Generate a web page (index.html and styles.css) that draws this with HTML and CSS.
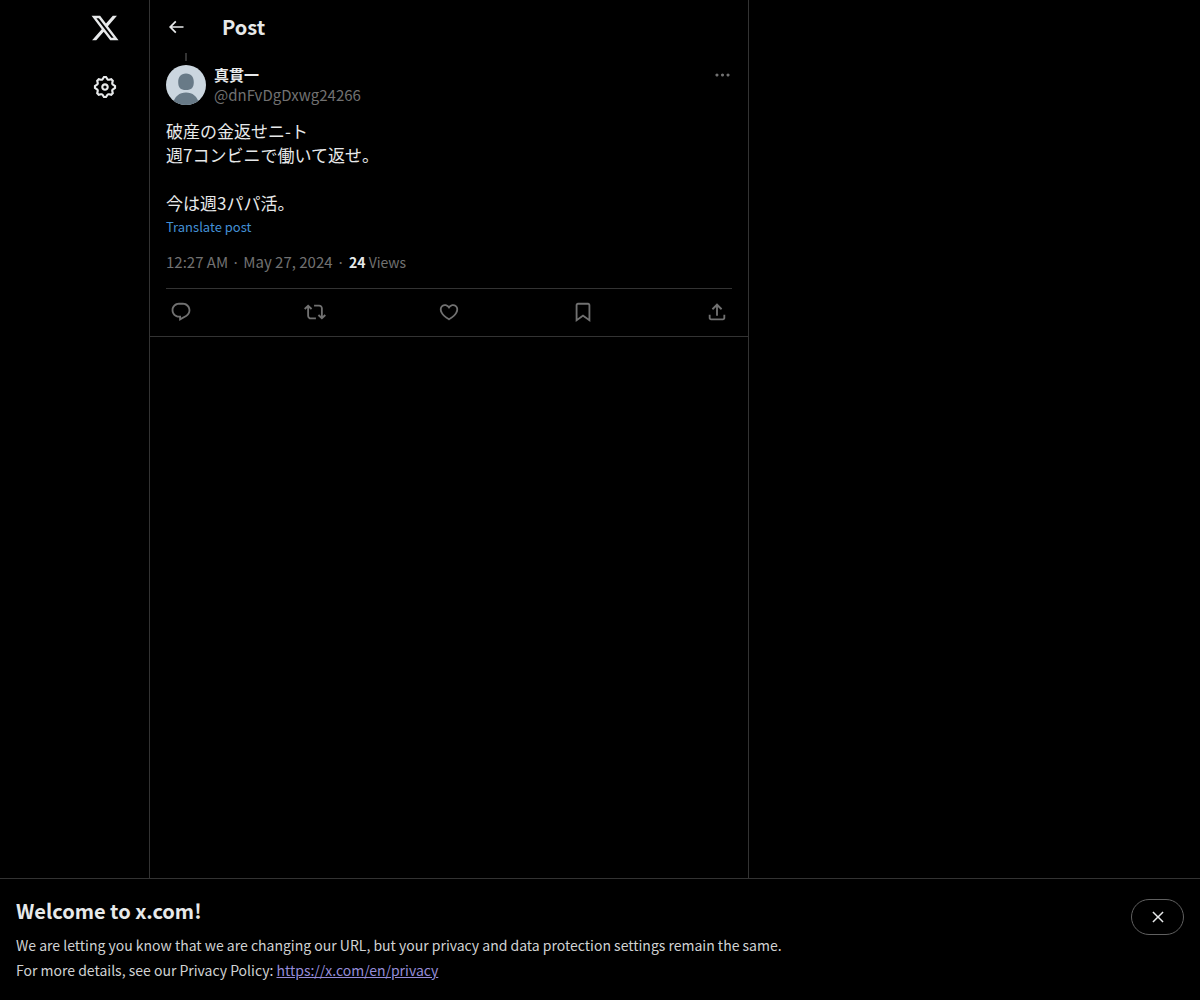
FILE: index.html
```html
<!DOCTYPE html>
<html lang="ja">
	<head>
		<meta charset="utf-8">
		<meta name="viewport" content="width=device-width, initial-scale=1">
		<title>Post / X</title>
		<link rel="stylesheet" href="styles.css">
	</head>
	<body>
		<div class="layout">
			<nav class="side">
				<a class="logo" href="#" aria-label="X">
					<svg viewBox="0 0 24 24"><path d="M18.244 2.25h3.308l-7.227 8.26 8.502 11.24H16.17l-5.214-6.817L4.99 21.75H1.68l7.73-8.835L1.254 2.25H8.08l4.713 6.231zm-1.161 17.52h1.833L7.084 4.126H5.117z"/></svg>
				</a>
				<a class="settings" href="#" aria-label="Settings">
					<svg viewBox="0 0 24 24"><path d="M10.54 1.75h2.92l1.57 2.36c.11.17.32.25.53.21l2.53-.59 2.17 2.17-.58 2.54c-.05.2.04.41.21.53l2.36 1.57v2.92l-2.36 1.57c-.17.12-.26.33-.21.53l.58 2.54-2.17 2.17-2.53-.59c-.21-.04-.42.04-.53.21l-1.57 2.36h-2.92l-1.58-2.36c-.11-.17-.32-.25-.52-.21l-2.54.59-2.17-2.17.58-2.54c.05-.2-.03-.41-.21-.53l-2.35-1.57v-2.92L4.1 8.97c.18-.12.26-.33.21-.53L3.73 5.9 5.9 3.73l2.54.59c.2.04.41-.04.52-.21l1.58-2.36zm1.07 2l-.98 1.47C10.05 6.08 9 6.5 7.99 6.27l-1.46-.34-.6.6.33 1.46c.24 1.01-.18 2.07-1.05 2.64l-1.46.98v.78l1.46.98c.87.57 1.29 1.63 1.05 2.64l-.33 1.46.6.6 1.46-.34c1.01-.23 2.06.19 2.64 1.05l.98 1.47h.78l.97-1.47c.58-.86 1.63-1.28 2.65-1.05l1.45.34.61-.6-.34-1.46c-.23-1.01.18-2.07 1.05-2.64l1.47-.98v-.78l-1.47-.98c-.87-.57-1.28-1.63-1.05-2.64l.34-1.46-.61-.6-1.45.34c-1.02.23-2.07-.19-2.65-1.05l-.97-1.47h-.78zM12 10.5c-.83 0-1.5.67-1.5 1.5s.67 1.5 1.5 1.5c.82 0 1.5-.67 1.5-1.5s-.68-1.5-1.5-1.5zM8.5 12c0-1.93 1.56-3.5 3.5-3.5 1.93 0 3.5 1.57 3.5 3.5s-1.57 3.5-3.5 3.5c-1.94 0-3.5-1.57-3.5-3.5z"/></svg>
				</a>
			</nav>
			<main class="column">
				<header class="top">
					<button class="back" aria-label="Back">
						<svg viewBox="0 0 24 24"><path d="M7.414 13l5.043 5.04-1.414 1.42L3.586 12l7.457-7.46 1.414 1.42L7.414 11H21v2H7.414z"/></svg>
					</button>
					<h1>Post</h1>
				</header>
				<article class="post">
					<div class="thread"></div>
					<div class="author">
						<svg class="avatar" viewBox="0 0 40 40">
							<defs><clipPath id="round"><circle cx="20" cy="20" r="20"/></clipPath></defs>
							<g clip-path="url(#round)">
								<path fill="#cbd6df" d="M0 0h40v40H0z"/>
								<path fill="#687a87" d="M20 8.500c-5.500 0-7.800 3.500-7.800 8.700 0 5.300 2.300 7.800 7.800 7.800s7.800-2.500 7.800-7.800c0-5.200-2.300-8.700-7.800-8.700zM20 27.500c-6.500 0-11.500 3.500-13.500 12.500h27C31.500 31 26.500 27.500 20 27.500z"/>
							</g>
						</svg>
						<div class="names">
							<a class="name" href="#">真貫一</a>
							<a class="handle" href="#">@dnFvDgDxwg24266</a>
						</div>
						<button class="more" aria-label="More">
							<svg viewBox="0 0 24 24"><path d="M3 12c0-1.100.900-2 2-2s2 .900 2 2-.900 2-2 2-2-.900-2-2zm9 2c1.100 0 2-.900 2-2s-.900-2-2-2-2 .900-2 2 .900 2 2 2zm7 0c1.100 0 2-.900 2-2s-.900-2-2-2-2 .900-2 2 .900 2 2 2z"/></svg>
						</button>
					</div>
					<p class="text">破産の金返せニ-ト<br>週7コンビニで働いて返せ。<br><br>今は週3パパ活。</p>
					<button class="translate">Translate post</button>
					<div class="meta">
						<a href="#">12:27 AM · May 27, 2024</a><span class="dot">·</span><span class="views"><b>24</b> Views</span>
					</div>
					<div class="actions">
						<button aria-label="Reply">
							<svg viewBox="0 0 24 24"><path d="M1.751 10c0-4.420 3.584-8 8.005-8h4.366c4.490 0 8.129 3.640 8.129 8.130 0 2.960-1.607 5.680-4.196 7.110l-8.054 4.460v-3.690h-.067c-4.490.100-8.183-3.510-8.183-8.010zm8.005-6c-3.317 0-6.005 2.690-6.005 6 0 3.370 2.770 6.080 6.138 6.010l.351-.010h1.761v2.300l5.087-2.810c1.951-1.080 3.163-3.130 3.163-5.360 0-3.390-2.744-6.130-6.129-6.130H9.756z"/></svg>
						</button>
						<button aria-label="Repost">
							<svg viewBox="0 0 24 24"><path d="M4.500 3.880l4.432 4.140-1.364 1.460L5.500 7.550V16c0 1.100.896 2 2 2H13v2H7.500c-2.209 0-4-1.790-4-4V7.550L1.432 9.480.068 8.020 4.500 3.880zM16.500 6H11V4h5.500c2.209 0 4 1.790 4 4v8.450l2.068-1.930 1.364 1.460-4.432 4.140-4.432-4.140 1.364-1.460 2.068 1.930V8c0-1.100-.896-2-2-2z"/></svg>
						</button>
						<button aria-label="Like">
							<svg viewBox="0 0 24 24"><path d="M16.697 5.500c-1.222-.060-2.679.510-3.890 2.160l-.805 1.090-.806-1.090C9.984 6.010 8.526 5.440 7.304 5.500c-1.243.070-2.349.780-2.910 1.910-.552 1.120-.633 2.780.479 4.820 1.074 1.970 3.257 4.270 7.129 6.610 3.870-2.340 6.052-4.640 7.126-6.610 1.111-2.040 1.030-3.700.477-4.820-.561-1.130-1.666-1.840-2.908-1.910zm4.187 7.690c-1.351 2.480-4.001 5.120-8.379 7.670l-.503.300-.504-.300c-4.379-2.550-7.029-5.190-8.382-7.670-1.360-2.500-1.410-4.860-.514-6.670.887-1.790 2.647-2.910 4.601-3.010 1.651-.090 3.368.560 4.798 2.010 1.429-1.450 3.146-2.100 4.796-2.010 1.954.100 3.714 1.220 4.601 3.010.896 1.810.846 4.170-.514 6.670z"/></svg>
						</button>
						<button aria-label="Bookmark">
							<svg viewBox="0 0 24 24"><path d="M4 4.500C4 3.120 5.119 2 6.500 2h11C18.881 2 20 3.120 20 4.500v18.440l-8-5.710-8 5.710V4.500zM6.500 4c-.276 0-.5.220-.5.500v14.560l6-4.290 6 4.290V4.500c0-.280-.224-.5-.5-.5h-11z"/></svg>
						</button>
						<button aria-label="Share">
							<svg viewBox="0 0 24 24"><path d="M12 2.590l5.700 5.700-1.410 1.420L13 6.410V16h-2V6.410l-3.300 3.300-1.410-1.420L12 2.590zM21 15l-.020 3.510c0 1.380-1.120 2.490-2.500 2.490H5.500C4.110 21 3 19.880 3 18.500V15h2v3.500c0 .280.220.500.5.500h12.980c.280 0 .5-.220.5-.5L19 15h2z"/></svg>
						</button>
					</div>
				</article>
			</main>
		</div>
		<div class="notice">
			<div>
				<h2>Welcome to x.com!</h2>
				<p>We are letting you know that we are changing our URL, but your privacy and data protection settings remain the same.<br>For more details, see our Privacy Policy: <a href="#">https://x.com/en/privacy</a></p>
			</div>
			<button class="close" aria-label="Close">
				<svg viewBox="0 0 24 24"><path d="M10.590 12L4.540 5.960l1.420-1.420L12 10.590l6.040-6.050 1.420 1.420L13.410 12l6.050 6.040-1.420 1.420L12 13.410l-6.040 6.050-1.420-1.420L10.590 12z"/></svg>
			</button>
		</div>
	</body>
</html>
```

FILE: styles.css
```css
*{
	box-sizing:border-box;
}
body{
	display:flex;
	flex-direction:column;
	min-height:100vh;
	margin:0;
	background:#000;
	color:#e7e9ea;
	font-family:"Noto Sans CJK JP", sans-serif;
	font-size:15px;
	line-height:20px;
}
h1,h2,p{
	margin:0;
}
a{
	color:inherit;
	text-decoration:none;
}
button{
	padding:0;
	border:0;
	background:none;
	color:inherit;
	font:inherit;
	cursor:pointer;
}
svg{
	display:block;
	width:20px;
	height:20px;
	fill:currentColor;
}
.layout{
	flex:1;
	display:grid;
	grid-template-columns:149px minmax(0, 600px) 1fr;
}
.side{
	display:flex;
	flex-direction:column;
	align-items:center;
	justify-self:end;
	gap:31px;
	width:88px;
	padding-top:13px;
}
.logo svg{
	width:30px;
	height:30px;
}
.settings svg{
	width:26px;
	height:26px;
}
.column{
	border:solid #333;
	border-width:0 1px;
}
.top{
	display:flex;
	align-items:center;
	gap:36px;
	height:53px;
	padding:0 16px;
}
h1,h2{
	font-size:20px;
	line-height:24px;
	font-weight:700;
}
.post{
	padding:0 16px;
	border-bottom:1px solid #333;
}
.thread{
	width:2px;
	height:8px;
	margin:0 19px 4px;
	background:#333;
}
.author{
	display:flex;
	align-items:flex-start;
	gap:8px;
}
.avatar{
	width:40px;
	height:40px;
}
.names{
	flex:1;
	display:flex;
	flex-direction:column;
	align-items:flex-start;
}
.name{
	font-weight:700;
}
.handle,.meta,.more,.actions{
	color:#717171;
}
.more svg{
	height:20px;
	width:19px;
}
.text{
	margin-top:14px;
	font-size:17px;
	line-height:24px;
}
.translate{
	display:block;
	color:#4390d6;
	font-size:13px;
	line-height:24px;
}
.meta{
	padding:13px 0 16px;
}
.views{
	font-size:14px;
}
.meta b{
	color:#e7e9ea;
}
.dot{
	padding:0 4px;
}
.actions{
	display:flex;
	align-items:center;
	justify-content:space-between;
	height:48px;
	padding:0 4px 2px;
	border-top:1px solid #333;
}
.actions svg{
	width:22px;
	height:22px;
}
.notice{
	display:flex;
	align-items:flex-start;
	justify-content:space-between;
	gap:16px;
	padding:20px 16px 17px;
	border-top:1px solid #333;
}
.notice p{
	margin-top:10px;
	color:#d0d2d3;
	font-size:14px;
	line-height:25px;
}
.notice a{
	color:#958cd8;
	text-decoration:underline;
}
.close{
	display:flex;
	align-items:center;
	justify-content:center;
	width:53px;
	height:36px;
	border:1px solid #606060;
	border-radius:18px;
}
.close svg{
	width:18px;
	height:18px;
}
```
